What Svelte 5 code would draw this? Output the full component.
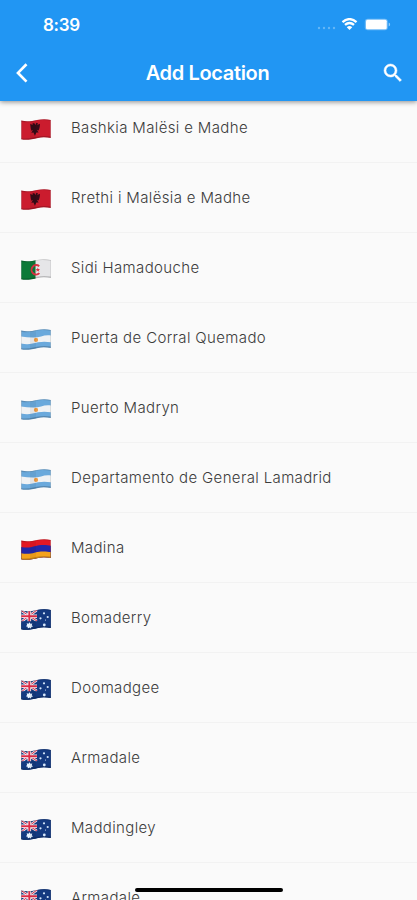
<script lang="ts">
  type Location = { id: number; name: string; country: string };

  const locations: Location[] = [
    { id: 1, name: 'Bashkia Malësi e Madhe', country: 'al' },
    { id: 2, name: 'Rrethi i Malësia e Madhe', country: 'al' },
    { id: 3, name: 'Sidi Hamadouche', country: 'dz' },
    { id: 4, name: 'Puerta de Corral Quemado', country: 'ar' },
    { id: 5, name: 'Puerto Madryn', country: 'ar' },
    { id: 6, name: 'Departamento de General Lamadrid', country: 'ar' },
    { id: 7, name: 'Madina', country: 'am' },
    { id: 8, name: 'Bomaderry', country: 'au' },
    { id: 9, name: 'Doomadgee', country: 'au' },
    { id: 10, name: 'Armadale', country: 'au' },
    { id: 11, name: 'Maddingley', country: 'au' },
    { id: 12, name: 'Armadale', country: 'au' },
  ];
</script>

{#snippet flag(country: string)}
  <svg class="flag" width="30" height="22" viewBox="0 0 30 22" aria-hidden="true">
    {#if country === 'al'}
      <rect width="30" height="22" fill="#cb1c2e" />
      <path d="M14.5 6l-1.4-2-1.9.7 1 1.200-3-.8.3 2.300.3 2 .6 2.300 1.600-.6-1.700 2.600 2.200-.3 1.400 3.300 1.500-3.300 2.200.2-1.700-2.800 1.700.6.8-2.200.4-2 .2-2.500-2.900 1.200 1-1.400-1.800-.7z" fill="#350b17" />
    {:else if country === 'dz'}
      <rect width="30" height="22" fill="#e6e6e8" />
      <rect width="14.500" height="22" fill="#0c7a38" />
      <path d="M18.200 7.200a4.600 4.800 0 1 0 .2 7" fill="none" stroke="#dc3343" stroke-width="1.900" />
      <path d="M16.800 8.600l.6 1.500h1.800l-1.400 1 .5 1.600-1.500-1-1.500 1 .5-1.600-1.400-1h1.800z" fill="#dc3343" />
    {:else if country === 'ar'}
      <rect width="30" height="22" fill="#f0f2f4" />
      <path d="M0 0h30v6.500c-7-1.300-11 2.300-18 2C8 8.500 4 8 0 7.500z" fill="#6aa9dc" />
      <path d="M0 14.500c8 1.500 11 0 17-1.200 5-.9 9-.6 13 0V22H0z" fill="#6aa9dc" />
      <circle cx="15" cy="10.900" r="2.100" fill="#ee9c44" />
    {:else if country === 'am'}
      <rect width="30" height="22" fill="#e31823" />
      <path d="M0 8c10 2 14-1.600 20-1.900 4-.2 7 .1 10 .6V22H0z" fill="#2328a8" />
      <path d="M0 14.200c10 2 14-1.400 20-1.700 4-.2 7 .1 10 .6V22H0z" fill="#f4a21c" />
    {:else}
      <rect width="30" height="22" fill="#153a80" />
      <path d="M0 1.500L16 12M16 1L0 13" stroke="#f3e9f0" stroke-width="2.600" />
      <path d="M0 1.500L16 12M16 1L0 13" stroke="#dc3552" stroke-width="1" />
      <path d="M8.300 0v13M0 7.300h16" stroke="#fff" stroke-width="3.600" />
      <path d="M8.300 0v13M0 7.300h16" stroke="#dc2c48" stroke-width="1.900" />
      <path d="M0 12.300h16.500V0H30v22H0z" fill="#153a80" />
      <path d="M8.500 13.200l1 1.500 1.800-.3-.5 1.800 1.200 1.300-1.700.5-.3 1.700-1.500-1.100-1.600 1-.3-1.800-1.700-.6 1.200-1.200-.4-1.700 1.800.4z" fill="#e8f2ff" />
      <g fill="#d8e8fa">
        <circle cx="23" cy="4.300" r="1.100" />
        <circle cx="19.500" cy="9.300" r="1.100" />
        <circle cx="26.700" cy="8" r="1.100" />
        <circle cx="24.500" cy="11" r=".6" />
        <circle cx="23.300" cy="16" r="1.400" />
      </g>
    {/if}
    <path d="M0 2c9 2 12-1 18-1.500 5-.4 9 .1 12 .6" fill="none" stroke="#000" stroke-opacity=".16" stroke-width="1.500" />
    <path d="M0 20.200c7 1 11-.4 16-1.500 5-1 10-.8 14-.2" fill="none" stroke="#000" stroke-opacity=".2" stroke-width="1.800" />
    <path d="M9 0h6v22H9z" fill="#000" fill-opacity=".05" />
    <path d="M.4 0v22M29.600 0v22" stroke="#000" stroke-opacity=".15" />
  </svg>
{/snippet}

<div class="screen">
  <header>
    <div class="status">
      <span class="time">8:39</span>
      <div class="indicators">
        <svg class="signal" width="19" height="4" viewBox="0 0 19 4" aria-hidden="true">
          <circle cx="2" cy="2" r="1.200" />
          <circle cx="7" cy="2" r="1.200" />
          <circle cx="12" cy="2" r="1.200" />
          <circle cx="17" cy="2" r="1.200" />
        </svg>
        <svg class="wifi" width="17" height="12" viewBox="0 0 18 13" aria-hidden="true">
          <path d="M1.400 4.500Q9-2.100 16.600 4.500M4.100 7.500q4.900-4.300 9.800 0" fill="none" stroke="#fff" stroke-width="2.500" />
          <path d="M9 12.900L6 9.900q3-2.300 6 0z" fill="#fff" />
        </svg>
        <svg width="27" height="13" viewBox="0 0 27 13" aria-hidden="true">
          <rect x=".8" y=".8" width="23" height="11.400" rx="3" fill="#fff" fill-opacity=".35" />
          <rect x="2" y="1.800" width="20.700" height="9.400" rx="1.500" fill="#fff" />
          <path d="M24.700 4.400c1.900.7 1.900 3.500 0 4.200z" fill="#fff" fill-opacity=".5" />
        </svg>
      </div>
    </div>
    <div class="toolbar">
      <button aria-label="Back">
        <svg width="12" height="20" viewBox="0 0 12 20">
          <path d="M10.500 1.200L2 9.900l8.500 8.700" fill="none" stroke="#fff" stroke-width="2.700" />
        </svg>
      </button>
      <h1>Add Location</h1>
      <button aria-label="Search">
        <svg width="24" height="24" viewBox="0 0 24 24">
          <path fill="#fff" stroke="#fff" stroke-width=".5" d="M15.500 14h-.79l-.28-.27A6.471 6.471 0 0 0 16 9.500 6.500 6.500 0 1 0 9.500 16c1.610 0 3.090-.59 4.230-1.570l.27.28v.79l5 4.990L20.490 19l-4.990-5zm-6 0C7.010 14 5 11.990 5 9.500S7.010 5 9.500 5 14 7.010 14 9.500 11.990 14 9.500 14z" />
        </svg>
      </button>
    </div>
  </header>

  <ul>
    {#each locations as location (location.id)}
      <li>
        {@render flag(location.country)}
        <span>{location.name}</span>
      </li>
    {/each}
  </ul>
  <div class="home-bar"></div>
</div>

<style>
  :global(body) {
    background: #fafafa;
  }

  .screen {
    position: relative;
    display: flex;
    flex-direction: column;
    height: 900px;
    overflow: hidden;
    background: #fafafa;
    font-family: Inter, "Liberation Sans", sans-serif;
  }

  header {
    flex: none;
    height: 100.5px;
    background: #2196f3;
    color: #fff;
    box-shadow: 0 1px 5px rgba(0, 0, 0, 0.45);
    z-index: 1;
  }

  .status {
    display: flex;
    align-items: center;
    justify-content: space-between;
    height: 48px;
    padding: 0 26px 0 43px;
  }

  .time {
    padding-top: 1px;
    font-size: 17px;
    font-weight: 600;
    letter-spacing: -0.3px;
  }

  .indicators {
    display: flex;
    align-items: center;
  }

  .signal {
    margin: 8px 5px 0 0;
    fill: #fff;
    fill-opacity: 0.3;
  }

  .wifi {
    margin-right: 6px;
  }

  .toolbar {
    display: flex;
    align-items: center;
    justify-content: space-between;
    height: 50px;
    padding: 0 12px 0 10px;
  }

  h1 {
    margin: 0;
    font-size: 20px;
    font-weight: 600;
    letter-spacing: -0.35px;
  }

  button {
    display: flex;
    align-items: center;
    justify-content: center;
    width: 24px;
    height: 24px;
    padding: 0;
    border: none;
    background: none;
    cursor: pointer;
  }

  /* list is scrolled slightly under the header */
  ul {
    flex: none;
    margin: -7.5px 0 0;
    padding: 0;
    list-style: none;
  }

  li {
    box-sizing: border-box;
    display: flex;
    align-items: center;
    gap: 20px;
    height: 70px;
    padding: 0 21px;
    border-bottom: 1px solid #f2f2f2;
    color: #3c3c3c;
    font-size: 15px;
    font-weight: 350;
    letter-spacing: 0.36px;
    white-space: nowrap;
  }

  .flag {
    margin-top: 5px;
    flex: none;
    clip-path: path("M0.300 1.600C6 3 11 2 16 1C21 0 26 0.100 29.700 1V19C25 18 21 18 17 18.900C11 20.300 5 21.600 0.300 20.300Z");
  }

  .home-bar {
    position: absolute;
    bottom: 8px;
    left: 135px;
    width: 148px;
    height: 4px;
    border-radius: 2px;
    background: #000;
  }
</style>
